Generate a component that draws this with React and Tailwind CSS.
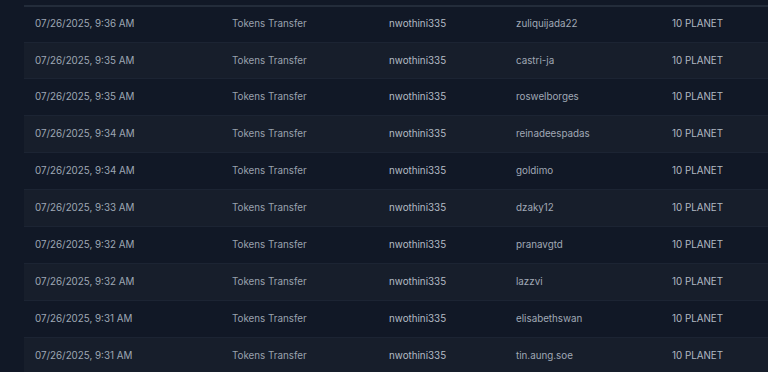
const rows = [
  ['07/26/2025, 9:36 AM', 'zuliquijada22'],
  ['07/26/2025, 9:35 AM', 'castri-ja'],
  ['07/26/2025, 9:35 AM', 'roswelborges'],
  ['07/26/2025, 9:34 AM', 'reinadeespadas'],
  ['07/26/2025, 9:34 AM', 'goldimo'],
  ['07/26/2025, 9:33 AM', 'dzaky12'],
  ['07/26/2025, 9:32 AM', 'pranavgtd'],
  ['07/26/2025, 9:32 AM', 'lazzvi'],
  ['07/26/2025, 9:31 AM', 'elisabethswan'],
  ['07/26/2025, 9:31 AM', 'tin.aung.soe'],
];

export default function App() {
  return (
    <div
      className="h-[372px] overflow-hidden bg-[#111826] pl-6 text-[9.8px]"
      style={{ fontFamily: 'Inter, "Noto Sans", sans-serif' }}
    >
      <div className="h-[5px]" />
      <div className="h-[2px] bg-[#232c3a]" />
      <table className="w-full border-collapse">
        <tbody>
          {rows.map(([date, to], i) => (
            <tr
              key={i}
              className={
                (i === 0 ? 'h-[35px] ' : 'h-[36.875px] ') +
                (i % 2 === 1 ? 'bg-[#171e2b] ' : 'bg-[#111826] ') +
                'border-b border-[#1c2433]'
              }
            >
              <td className="w-[196px] py-0 pt-[1px] pr-3 pl-[11px] text-[#9ea7b4]">{date}</td>
              <td className="w-[157px] px-3 py-0 pt-[1px] text-[#9aa2ae]">Tokens Transfer</td>
              <td className="w-[127px] px-3 py-0 pt-[1px] text-[#b4bbc5]">nwothini335</td>
              <td className="w-[156px] px-3 py-0 pt-[1px] text-[#a0a8b5]">{to}</td>
              <td className="px-3 py-0 pt-[1px] text-[#b1b8c2]">10 PLANET</td>
            </tr>
          ))}
        </tbody>
      </table>
    </div>
  );
}
